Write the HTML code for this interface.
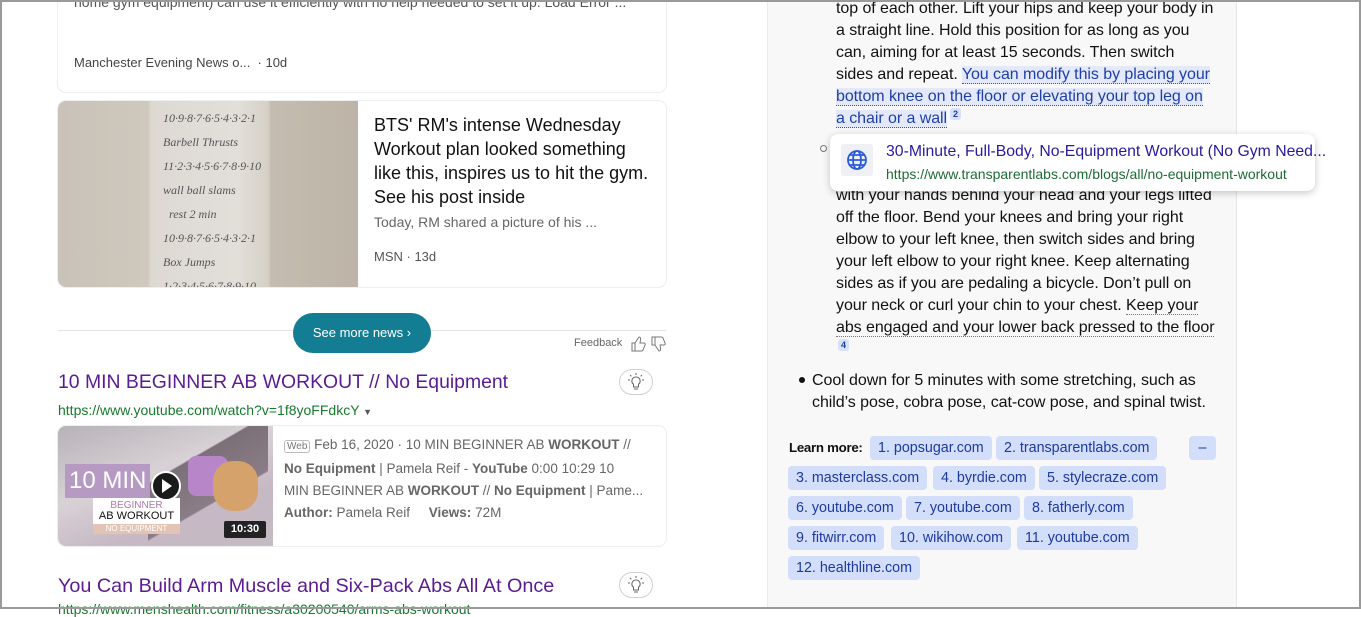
<!DOCTYPE html>
<html><head><meta charset="utf-8"><style>
*{margin:0;padding:0;box-sizing:border-box}
body{width:1361px;height:609px;overflow:hidden;background:#fff;font-family:"Liberation Sans",Arial,sans-serif;position:relative}
.frame{position:absolute;left:0;top:0;width:1361px;height:609px;border:2px solid #9a9a9a;pointer-events:none;z-index:50}
.abs{position:absolute}
.card{position:absolute;background:#fff;border-radius:8px;box-shadow:0 0 0 1px #eceef0}
.rp{position:absolute;left:767px;top:0;width:470px;height:609px;background:#f8f8f9;border-left:1px solid #ececec;border-right:1px solid #e6e6e6}
.rt{position:absolute;left:836px;font-size:16px;line-height:22px;color:#111;width:390px;white-space:nowrap;letter-spacing:-0.06px}
.hl{background:#e3e9fb;color:#1f3fa8;border-bottom:1px dotted #3355aa}
.dt{border-bottom:1px dotted #777}
.sup{display:inline-block;background:#d7e1f8;color:#1f3fa8;font-size:9px;font-weight:bold;padding:0 3px;border-radius:3px;line-height:12px;vertical-align:top;margin-left:3px}
.chip{position:absolute;height:24px;line-height:24px;background:#d3defa;color:#1d3a9e;font-size:14.3px;padding:0 8px;border-radius:4px;white-space:nowrap}
.bulb{position:absolute;width:34px;height:26px;border:1px solid #d0d0d0;border-radius:13px;background:#fff}
</style></head><body>
<div class="frame"></div>

<div class="card" style="left:58px;top:-10px;width:608px;height:102px"></div>
<div class="abs" style="left:74px;top:-6px;font-size:14px;color:#555;white-space:nowrap">home gym equipment) can use it efficiently with no help needed to set it up. Load Error ...</div>
<div class="abs" style="left:74px;top:55px;font-size:13px;color:#444">Manchester Evening News o... &nbsp;· 10d</div>

<div class="card" style="left:58px;top:101px;width:608px;height:186px;overflow:hidden">
  <div class="abs" style="left:0;top:0;width:300px;height:186px;background:linear-gradient(90deg,#c9c2b8 0,#cfc8bd 30%,#ddd9d2 31%,#e2dfd9 60%,#d6d0c6 70%,#c4bcb0 71%,#bdb4a7 100%)"></div>
  <div class="abs" style="left:105px;top:5px;font-size:12px;color:#555;line-height:24px;font-family:'Liberation Serif',serif;font-style:italic">10·9·8·7·6·5·4·3·2·1<br>Barbell Thrusts<br>11·2·3·4·5·6·7·8·9·10<br>wall ball slams<br>&nbsp;&nbsp;rest 2 min<br>10·9·8·7·6·5·4·3·2·1<br>Box Jumps<br>1·2·3·4·5·6·7·8·9·10</div>
</div>
<div class="abs" style="left:374px;top:113px;font-size:18px;line-height:24px;color:#111;width:280px">BTS' RM's intense Wednesday Workout plan looked something like this, inspires us to hit the gym. See his post inside</div>
<div class="abs" style="left:374px;top:214px;font-size:14px;color:#666">Today, RM shared a picture of his ...</div>
<div class="abs" style="left:374px;top:249px;font-size:13px;color:#555">MSN · 13d</div>

<div class="abs" style="left:58px;top:330px;width:608px;height:1px;background:#e5e5e5"></div>
<div class="abs" style="left:293px;top:313px;width:138px;height:40px;border-radius:20px;background:#137d93;color:#fff;font-size:13px;line-height:40px;text-align:center">See more news &#x203A;</div>
<div class="abs" style="left:574px;top:337px;font-size:11px;color:#666">Feedback</div>
<svg class="abs" style="left:630px;top:335px" width="36" height="18" viewBox="0 0 36 18" fill="none" stroke="#777" stroke-width="1"><path d="M2 8h3v8H2zM5 8l4-6c1 0 2 1 1.5 3L10 8h4c1 0 1.5 1 1 2l-2 5c-.3.7-1 1-1.5 1H5"/><path d="M22 10h3V2h-3zM25 10l4 6c1 0 2-1 1.5-3L30 10h4c1 0 1.5-1 1-2l-2-5c-.3-.7-1-1-1.5-1H25"/></svg>

<div class="abs" style="left:58px;top:371px;font-size:19.4px;color:#5b1c91;white-space:nowrap">10 MIN BEGINNER AB WORKOUT // No Equipment</div>
<div class="bulb" style="left:619px;top:369px"></div>
<svg class="abs" style="left:627px;top:372px" width="18" height="20" viewBox="0 0 18 20" fill="none" stroke="#666" stroke-width="1"><path d="M9 5a4 4 0 0 0-2.5 7.2V15h5v-2.8A4 4 0 0 0 9 5zM7 17h4M9 1v2M3 3l1.3 1.3M15 3l-1.3 1.3M1 8h2M15 8h2"/></svg>
<div class="abs" style="left:58px;top:402px;font-size:14px;color:#177a2c">https://www.youtube.com/watch?v=1f8yoFFdkcY <span style="font-size:9px;color:#555">▼</span></div>
<div class="card" style="left:58px;top:426px;width:608px;height:120px;overflow:hidden">
  <div class="abs" style="left:0;top:0;width:215px;height:120px;background:linear-gradient(160deg,#b7b2b8 0,#d8d2d6 40%,#c6b8c4 70%,#c4bcc2 100%)"></div>
  <div class="abs" style="left:90px;top:0;width:120px;height:120px;background:linear-gradient(150deg,transparent 30%,#7b6f78 31%,#8a7d86 60%,transparent 61%)"></div>
  <div class="abs" style="left:130px;top:30px;width:40px;height:40px;border-radius:8px;background:#b786c8"></div>
  <div class="abs" style="left:155px;top:35px;width:45px;height:50px;border-radius:20px;background:#d4a26a"></div>
  <div class="abs" style="left:7px;top:38px;width:85px;height:34px;background:#b69ac4;color:#fff;font-size:24px;line-height:34px;padding-left:4px;white-space:nowrap">10 MIN</div>
  <div class="abs" style="left:35px;top:72px;width:87px;height:26px;background:#fff;text-align:center;font-size:10px;line-height:11px;color:#a67aa8;padding-top:2px">BEGINNER<br><span style="color:#111;font-size:11px">AB WORKOUT</span></div>
  <div class="abs" style="left:35px;top:98px;width:87px;height:10px;background:#e2c3b4;color:#fff;font-size:8px;text-align:center;line-height:10px">NO EQUIPMENT</div>
  <div class="abs" style="left:93px;top:45px;width:30px;height:30px;border-radius:50%;background:#1a1a1a;border:2px solid #fff"></div>
  <div class="abs" style="left:104px;top:53px;width:0;height:0;border-left:10px solid #fff;border-top:7px solid transparent;border-bottom:7px solid transparent"></div>
  <div class="abs" style="left:166px;top:95px;width:42px;height:17px;background:#222;color:#fff;font-size:11px;font-weight:bold;text-align:center;line-height:17px;border-radius:2px">10:30</div>
</div>
<div class="abs" style="left:284px;top:434px;font-size:13.5px;line-height:22px;color:#666;width:375px">
<span style="font-size:10px;border:1px solid #bbb;border-radius:3px;padding:0 2px;color:#777">Web</span> Feb 16, 2020 · 10 MIN BEGINNER AB <b>WORKOUT</b> //<br><b>No Equipment</b> | Pamela Reif - <b>YouTube</b> 0:00 10:29 10<br>MIN BEGINNER AB <b>WORKOUT</b> // <b>No Equipment</b> | Pame...<br><b>Author:</b> Pamela Reif &nbsp;&nbsp;&nbsp;&nbsp;<b>Views:</b> 72M</div>

<div class="abs" style="left:58px;top:575px;font-size:19.8px;color:#5b1c91;white-space:nowrap">You Can Build Arm Muscle and Six-Pack Abs All At Once</div>
<div class="bulb" style="left:619px;top:572px"></div>
<svg class="abs" style="left:627px;top:575px" width="18" height="20" viewBox="0 0 18 20" fill="none" stroke="#666" stroke-width="1"><path d="M9 5a4 4 0 0 0-2.5 7.2V15h5v-2.8A4 4 0 0 0 9 5zM7 17h4M9 1v2M3 3l1.3 1.3M15 3l-1.3 1.3M1 8h2M15 8h2"/></svg>
<div class="abs" style="left:58px;top:601px;font-size:14px;color:#177a2c">https://www.menshealth.com/fitness/a30200540/arms-abs-workout</div>

<div class="rp"></div>
<div class="rt" style="top:-2px">top of each other. Lift your hips and keep your body in<br>a straight line. Hold this position for as long as you<br>can, aiming for at least 15 seconds. Then switch<br>sides and repeat. <span class="hl">You can modify this by placing your</span><br><span class="hl">bottom knee on the floor or elevating your top leg on</span><br><span class="hl">a chair or a wall</span><span class="sup">2</span></div>
<div class="abs" style="left:820px;top:145px;width:7px;height:7px;border:1px solid #777;border-radius:50%"></div>
<div class="rt" style="top:185px">with your hands behind your head and your legs lifted<br>off the floor. Bend your knees and bring your right<br>elbow to your left knee, then switch sides and bring<br>your left elbow to your right knee. Keep alternating<br>sides as if you are pedaling a bicycle. Don’t pull on<br>your neck or curl your chin to your chest. <span class="dt">Keep your</span><br><span class="dt">abs engaged and your lower back pressed to the floor</span><br><span class="sup" style="margin-left:2px">4</span></div>
<div class="abs" style="left:799px;top:377px;width:6px;height:6px;background:#111;border-radius:50%"></div>
<div class="rt" style="left:812px;top:370px">Cool down for 5 minutes with some stretching, such as<br>child’s pose, cobra pose, cat-cow pose, and spinal twist.</div>

<div class="abs" style="left:789px;top:440px;font-size:13.3px;font-weight:bold;color:#111;letter-spacing:-0.3px">Learn more:</div>
<div class="chip" style="left:870px;top:436px">1. popsugar.com</div>
<div class="chip" style="left:996px;top:436px">2. transparentlabs.com</div>
<div class="chip" style="left:1189px;top:436px;width:27px;text-align:center;padding:0">–</div>
<div class="chip" style="left:788px;top:466px">3. masterclass.com</div>
<div class="chip" style="left:933px;top:466px">4. byrdie.com</div>
<div class="chip" style="left:1039px;top:466px">5. stylecraze.com</div>
<div class="chip" style="left:788px;top:496px">6. youtube.com</div>
<div class="chip" style="left:906px;top:496px">7. youtube.com</div>
<div class="chip" style="left:1024px;top:496px">8. fatherly.com</div>
<div class="chip" style="left:788px;top:526px">9. fitwirr.com</div>
<div class="chip" style="left:891px;top:526px">10. wikihow.com</div>
<div class="chip" style="left:1017px;top:526px">11. youtube.com</div>
<div class="chip" style="left:788px;top:556px">12. healthline.com</div>

<div class="abs" style="left:830px;top:134px;width:485px;height:57px;background:#fff;border-radius:8px;box-shadow:0 2px 8px rgba(0,0,0,.22);z-index:10">
  <div class="abs" style="left:11px;top:10px;width:32px;height:32px;background:#eef0f3;border-radius:3px"></div>
  <svg class="abs" style="left:16px;top:15px" width="22" height="22" viewBox="0 0 22 22" fill="none" stroke="#2d5bd8" stroke-width="1.8"><circle cx="11" cy="11" r="9"/><ellipse cx="11" cy="11" rx="4" ry="9"/><path d="M2 11h18M4 6h14M4 16h14"/></svg>
  <div class="abs" style="left:56px;top:9px;font-size:15.8px;color:#2a1a9e;white-space:nowrap">30-Minute, Full-Body, No-Equipment Workout (No Gym Need...</div>
  <div class="abs" style="left:56px;top:32px;font-size:14px;color:#1e6b35;white-space:nowrap">https://www.transparentlabs.com/blogs/all/no-equipment-workout</div>
</div>
</body></html>
